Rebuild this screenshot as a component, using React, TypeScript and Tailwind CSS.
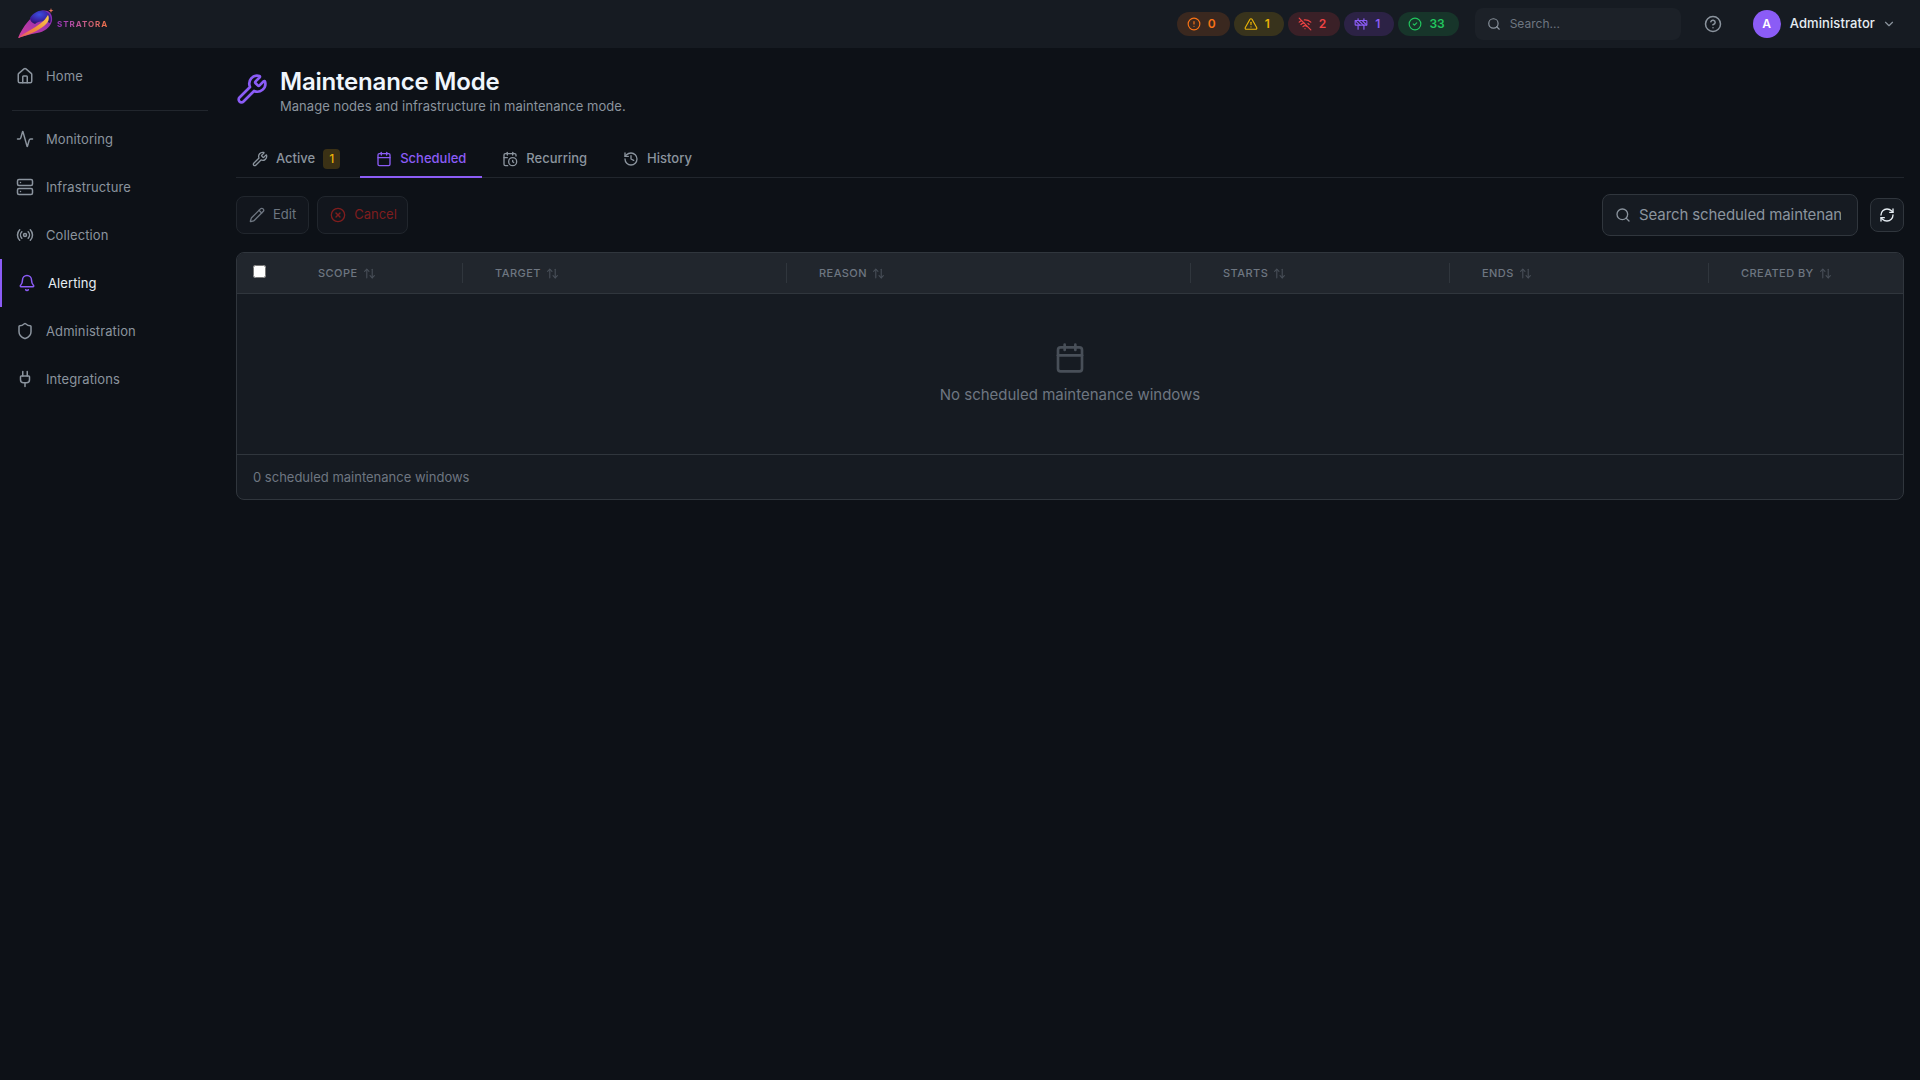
import React from 'react';
import {
  House, Activity, Server, Radio, Bell, Shield, Plug, Wrench, Calendar, CalendarClock, History,
  Pencil, CircleX, Search, RefreshCw, CircleAlert, TriangleAlert, WifiOff, Construction,
  CircleCheck, CircleHelp, ChevronDown, ArrowUpDown,
} from 'lucide-react';

const Logo = () => (
  <svg width="38" height="32" viewBox="0 0 38 32" fill="none" className="shrink-0">
    <defs>
      <radialGradient id="orb" cx="0.45" cy="0.3" r="0.8">
        <stop offset="0" stopColor="#3b4fe0" />
        <stop offset="0.6" stopColor="#3a1f9e" />
        <stop offset="1" stopColor="#1c1248" />
      </radialGradient>
      <linearGradient id="tail" x1="0" y1="1" x2="1" y2="0">
        <stop offset="0" stopColor="#e8556b" />
        <stop offset="0.45" stopColor="#f08a3c" />
        <stop offset="1" stopColor="#f7d04e" />
      </linearGradient>
      <linearGradient id="tail2" x1="0" y1="1" x2="1" y2="0">
        <stop offset="0" stopColor="#d43f9c" />
        <stop offset="1" stopColor="#7a2bb8" />
      </linearGradient>
    </defs>
    <path d="M1 30 C6 18 14 8 24 3 C32 1 36 6 35 13 C33 20 27 24 20 25 C13 26 7 28 1 30Z" fill="url(#tail2)" />
    <path d="M13 10 C16 5 23 1 28 3 C33 5 35 10 33 15 C29 13 22 12 18 16 C15 15 13 13 13 10Z" fill="url(#orb)" />
    <path d="M1 30 C8 24 17 21 24 15 C27 13 29 10 31 7 C33 11 31 15 27 18 C21 23 11 27 1 30Z" fill="url(#tail)" />
    <path d="M34 0 L34.6 2 L36.5 2.6 L34.6 3.2 L34 5 L33.4 3.2 L31.5 2.6 L33.4 2Z" fill="#f0785a" />
  </svg>
);

const pills = [
  { icon: CircleAlert, value: '0', cls: 'bg-[#3a281f] text-[#f97316]' },
  { icon: TriangleAlert, value: '1', cls: 'bg-[#38331c] text-[#eab308]' },
  { icon: WifiOff, value: '2', cls: 'bg-[#3a2027] text-[#ef4444]' },
  { icon: Construction, value: '1', cls: 'bg-[#2c2245] text-[#8b5cf6]' },
  { icon: CircleCheck, value: '33', cls: 'bg-[#17352a] text-[#22c55e]' },
];

const navItems = [
  { label: 'Monitoring', icon: Activity },
  { label: 'Infrastructure', icon: Server },
  { label: 'Collection', icon: Radio },
  { label: 'Alerting', icon: Bell, active: true },
  { label: 'Administration', icon: Shield },
  { label: 'Integrations', icon: Plug },
];

const columns = ['Scope', 'Target', 'Reason', 'Starts', 'Ends', 'Created by'];

export default function App() {
  return (
    <div className="min-h-screen flex flex-col bg-[#0d1117] text-[#e6edf3] font-['Inter',sans-serif]">
      {/* top bar */}
      <header className="h-12 shrink-0 flex items-center justify-between bg-[#161b22] pl-[17px] pr-[24px]">
        <div className="flex items-center gap-[2px]">
          <Logo />
          <span className="text-[8px] leading-none font-bold tracking-[0.12em] bg-gradient-to-r from-[#9b2fc0] to-[#f07040] bg-clip-text text-transparent">
            STRATORA
          </span>
        </div>
        <div className="flex items-center">
          <div className="flex items-center gap-1">
            {pills.map((p, i) => (
              <div key={i} className={`h-6 pl-[10px] pr-[14px] rounded-full flex items-center gap-[7px] text-xs font-semibold ${p.cls}`}>
                <p.icon size={14} />
                <span>{p.value}</span>
              </div>
            ))}
          </div>
          <div className="ml-4 w-[206px] h-8 rounded-lg bg-[#1c2128] flex items-center pl-[12px] gap-[9px] text-xs text-[#6e7681]">
            <Search size={14} className="text-[#8b949e]" />
            <span>Search...</span>
          </div>
          <CircleHelp size={18} className="ml-[23px] text-[#8b949e]" />
          <div className="ml-[31px] w-7 h-7 rounded-full bg-[#8b5cf6] flex items-center justify-center text-xs font-semibold text-white">
            A
          </div>
          <span className="ml-[9px] text-[13px] tracking-[0.1px] font-medium text-[#e6edf3]">Administrator</span>
          <ChevronDown size={14} className="ml-[7px] text-[#8b949e]" />
        </div>
      </header>

      <div className="flex flex-1">
        {/* sidebar */}
        <aside className="w-[220px] shrink-0 pt-1 text-[13px] tracking-[0.1px] text-[#8b949e]">
          <div className="h-12 flex items-center gap-3 pl-4">
            <House size={18} />
            <span className="pt-px">Home</span>
          </div>
          <div className="mx-3 mt-[10px] mb-1 h-px bg-[#21262d]" />
          {navItems.map((item) => (
            <div
              key={item.label}
              className={
                item.active
                  ? 'h-12 flex items-center gap-3 pl-4 border-l-2 border-[#8b5cf6] text-[#e6edf3]'
                  : 'h-12 flex items-center gap-3 pl-4'
              }
            >
              <item.icon size={18} className={item.active ? 'text-[#8b5cf6]' : ''} />
              <span className="pt-px">{item.label}</span>
            </div>
          ))}
        </aside>

        {/* content */}
        <main className="flex-1 min-w-0 px-4 pt-4">
          <div className="flex items-center gap-3 h-14">
            <Wrench size={32} className="-mt-[6px] text-[#8b5cf6]" />
            <div>
              <h1 className="text-2xl leading-7 tracking-[-0.2px] font-semibold text-[#f0f6fc]">Maintenance Mode</h1>
              <p className="text-[13px] leading-5 tracking-[0.04px] text-[#8b949e]">Manage nodes and infrastructure in maintenance mode.</p>
            </div>
          </div>

          <div className="mt-5 h-[38px] flex gap-1 border-b border-[#21262d] text-[13px] font-medium text-[#8b949e]">
            <div className="h-[38px] px-4 flex items-center gap-2">
              <Wrench size={16} />
              <span>Active</span>
              <span className="w-[17px] h-5 rounded bg-[#3b3115] text-[#eab308] text-xs flex items-center justify-center">1</span>
            </div>
            <div className="h-[38px] px-4 pt-[2px] flex items-center gap-2 border-b-2 border-[#8b5cf6] text-[#8b5cf6]">
              <Calendar size={16} />
              <span>Scheduled</span>
            </div>
            <div className="h-[38px] px-4 flex items-center gap-2">
              <CalendarClock size={16} />
              <span>Recurring</span>
            </div>
            <div className="h-[38px] px-4 flex items-center gap-2">
              <History size={16} />
              <span>History</span>
            </div>
          </div>

          <div className="mt-4 flex items-center justify-between">
            <div className="flex gap-2">
              <button className="h-[38px] px-3 flex items-center gap-2 rounded-lg border border-[#21262d] bg-[#12161d] text-[13px] text-[#6e7681]">
                <Pencil size={16} />
                Edit
              </button>
              <button className="h-[38px] pl-3 pr-[10px] flex items-center gap-2 rounded-lg border border-[#21262d] bg-[#12161d] text-[13px] text-[#7f1d1d]">
                <CircleX size={16} />
                Cancel
              </button>
            </div>
            <div className="flex items-center gap-3">
              <label className="w-[256px] h-[42px] pl-3 pr-4 flex items-center gap-2 rounded-lg border border-[#30363d] bg-[#161b22]">
                <Search size={16} className="shrink-0 text-[#8b949e]" />
                <input
                  placeholder="Search scheduled maintenance..."
                  className="min-w-0 flex-1 bg-transparent text-[15px] tracking-[-0.1px] outline-none placeholder:text-[#8b949e]"
                />
              </label>
              <button className="w-[34px] h-[34px] flex items-center justify-center rounded-lg border border-[#30363d] bg-[#161b22] text-[#e6edf3]">
                <RefreshCw size={16} />
              </button>
            </div>
          </div>

          {/* table */}
          <div className="mt-4 rounded-lg border border-[#30363d] bg-[#161b22] overflow-hidden">
            <div className="h-[41px] grid grid-cols-[49px_177px_324px_404px_259px_259px_1fr] items-center bg-[#21262d] border-b border-[#30363d]">
              <div className="pl-4 flex items-center -mt-[3px]">
                <input type="checkbox" className="w-[13px] h-[13px]" />
              </div>
              {columns.map((c, i) => (
                <div key={c} className="flex items-center justify-between pl-8">
                  <div className="flex items-center gap-[5px] text-[11px] font-medium uppercase tracking-[0.04em] text-[#6e7681]">
                    {c}
                    <ArrowUpDown size={13} className="text-[#484f58]" />
                  </div>
                  {i < columns.length - 1 && <div className="w-px h-5 bg-[#30363d]" />}
                </div>
              ))}
            </div>
            <div className="h-[161px] flex flex-col items-center pt-[48px] border-b border-[#30363d]">
              <Calendar size={32} className="text-[#484f58]" />
              <p className="mt-[10px] text-[15px] text-[#6e7681]">No scheduled maintenance windows</p>
            </div>
            <div className="h-11 pl-4 pt-px flex items-center text-[13px] text-[#6e7681]">0 scheduled maintenance windows</div>
          </div>
        </main>
      </div>
    </div>
  );
}
